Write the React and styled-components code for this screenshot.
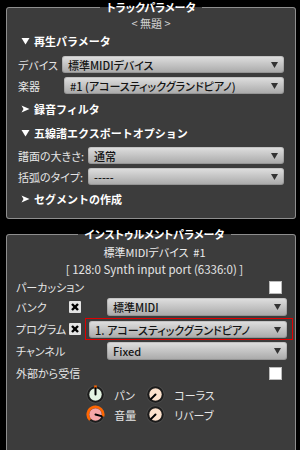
import React from "react";
import styled, { createGlobalStyle } from "styled-components";

const GlobalStyle = createGlobalStyle`
  html, body {
    margin: 0;
    padding: 0;
    background: #000;
  }
  body {
    width: 300px;
    height: 450px;
    overflow: hidden;
    font-family: "Noto Sans CJK JP", "DejaVu Sans", sans-serif;
    font-feature-settings: "palt";
  }
`;

const polar = (r, deg) => {
  const a = ((deg - 90) * Math.PI) / 180;
  return [9.5 + r * Math.cos(a), 9.5 + r * Math.sin(a)];
};

const arcPath = (r, from, to) => {
  const [x1, y1] = polar(r, from);
  const [x2, y2] = polar(r, to);
  const large = to - from > 180 ? 1 : 0;
  return `M${x1} ${y1} A${r} ${r} 0 ${large} 1 ${x2} ${y2}`;
};

const Knob = ({ face, angle, from, to }) => {
  const [px, py] = polar(6.2, angle);
  return (
    <svg width="19" height="19" viewBox="0 0 19 19">
      <circle cx="9.5" cy="9.5" r="9.2" fill="#4a4a4a" />
      <circle cx="9.5" cy="9.5" r="8.3" fill="#1c1c1c" />
      {from !== undefined && (
        <path d={arcPath(7.6, from, to)} stroke="#ff6600" strokeWidth="2.8" fill="none" />
      )}
      <circle cx="9.5" cy="9.5" r="6.2" fill={face} />
      <line x1="9.5" y1="9.5" x2={px} y2={py} stroke="#000" strokeWidth="2" strokeLinecap="round" />
    </svg>
  );
};

const DownArrow = () => (
  <svg width="7" height="6" viewBox="0 0 7 6">
    <polygon points="0,0 7,0 3.5,6" fill="#333" />
  </svg>
);

const Triangle = ({ open }) =>
  open ? (
    <svg width="9" height="8" viewBox="0 0 9 8">
      <polygon points="0.5,1 8.5,1 4.5,7.5" fill="#fff" />
    </svg>
  ) : (
    <svg width="9" height="8" viewBox="0 0 9 8">
      <polygon points="0.5,0.5 8.5,4 0.5,7.5 2.5,4" fill="#fff" />
    </svg>
  );

const XBox = () => (
  <svg width="12" height="12" viewBox="0 0 12 12">
    <rect x="0" y="0" width="12" height="12" rx="1" fill="#e4e4e4" />
    <line x1="3" y1="3" x2="9" y2="9" stroke="#000" strokeWidth="2.4" />
    <line x1="9" y1="3" x2="3" y2="9" stroke="#000" strokeWidth="2.4" />
  </svg>
);

const Page = styled.div`
  display: flex;
  flex-direction: column;
  padding-top: 1px;
`;

const Panel = styled.fieldset`
  margin: ${(p) => p.$mt || 0}px 4px 0 6px;
  padding: 0 ${(p) => p.$pr}px ${(p) => p.$pb}px ${(p) => p.$pl}px;
  border: 1px solid #8e8e8e;
  border-radius: 3px;
  background: #3c3c3c;
  min-width: 0;
`;

const Legend = styled.legend`
  margin: 0 auto;
  padding: 0 7px;
  font-size: 11px;
  line-height: 12px;
  font-weight: bold;
  color: #fff;
`;

const Body = styled.div`
  display: flex;
  flex-direction: column;
`;

const Caption = styled.div`
  margin-top: ${(p) => p.$mt}px;
  height: 14px;
  line-height: 14px;
  text-align: center;
  font-size: ${(p) => p.$size || 11}px;
  color: ${(p) => p.$color || "#d4d4d4"};
  white-space: nowrap;
`;

const Header = styled.div`
  margin-top: ${(p) => p.$mt}px;
  height: 18px;
  display: flex;
  align-items: center;
  gap: 4px;
  padding-left: 3px;
  font-size: 11px;
  font-weight: bold;
  color: #fff;
  font-feature-settings: normal;
`;

const Form = styled.div`
  margin-top: ${(p) => p.$mt}px;
  display: grid;
  grid-template-columns: auto 1fr;
  column-gap: 4px;
  row-gap: 4px;
  align-items: center;
`;

const Label = styled.div`
  font-size: 11px;
  color: #e6e6e6;
  white-space: nowrap;
  grid-column: ${(p) => p.$span || "auto"};
`;

const Select = styled.div`
  height: ${(p) => p.$h || 17}px;
  box-sizing: border-box;
  display: flex;
  align-items: center;
  justify-content: space-between;
  padding: 0 6px 0 6px;
  margin: ${(p) => p.$m || "0"};
  background: linear-gradient(#e0e0e0, #a8a8a8);
  border-radius: 3px;
  box-shadow: inset 0 0 0 1px rgba(0, 0, 0, 0.12);
  color: #141414;
  font-size: 11px;
  font-weight: 500;
  white-space: nowrap;
`;

const InstRow = styled.div`
  margin-top: ${(p) => p.$mt}px;
  display: grid;
  grid-template-columns: 53px 12px 1fr;
  align-items: center;
`;

const Highlight = styled.div`
  margin-left: 4px;
  padding: 2px 5px 1px 3px;
  border: 1px solid #e00000;
`;

const CheckBox = styled.div`
  justify-self: end;
  margin-right: 11px;
  width: 13px;
  height: 13px;
  box-sizing: border-box;
  background: #fff;
  border: 1px solid #bbb;
`;

const KnobGrid = styled.div`
  margin: 4px 8px 0 0;
  display: grid;
  grid-template-columns: 19px 23px 19px auto;
  column-gap: 9px;
  row-gap: 1px;
  justify-content: center;
  align-items: center;
`;

const KnobLabel = styled.div`
  font-size: 11px;
  color: #e6e6e6;
  white-space: nowrap;
`;

export default function App() {
  return (
    <Page>
      <GlobalStyle />
      <Panel $pl={11} $pr={11} $pb={10}>
        <Legend>トラックパラメータ</Legend>
        <Body>
          <Caption $mt={3}>&lt; 無題 &gt;</Caption>
          <Header $mt={2}>
            <Triangle open />
            再生パラメータ
          </Header>
          <Form $mt={6}>
            <Label>デバイス</Label>
            <Select>
              標準MIDIデバイス
              <DownArrow />
            </Select>
            <Label>楽器</Label>
            <Select $m="0 0 0 2px">
              #1 (アコースティックグランドピアノ)
              <DownArrow />
            </Select>
          </Form>
          <Header $mt={6}>
            <Triangle />
            録音フィルタ
          </Header>
          <Header $mt={6}>
            <Triangle open />
            五線譜エクスポートオプション
          </Header>
          <Form $mt={5}>
            <Label>譜面の大きさ:</Label>
            <Select>
              通常
              <DownArrow />
            </Select>
            <Label>括弧のタイプ:</Label>
            <Select>
              -----
              <DownArrow />
            </Select>
          </Form>
          <Header $mt={5}>
            <Triangle />
            セグメントの作成
          </Header>
        </Body>
      </Panel>

      <Panel $mt={9} $pl={9} $pr={2} $pb={28}>
        <Legend>インストゥルメントパラメータ</Legend>
        <Body>
          <Caption $mt={5} $color="#ececec">
            標準MIDIデバイス&nbsp;&nbsp;#1
          </Caption>
          <Caption $mt={3} $size={11.5} $color="#e4e4e4">
            [ 128:0 Synth input port (6336:0) ]
          </Caption>
          <InstRow $mt={3}>
            <Label $span="1 / 3">パーカッション</Label>
            <CheckBox />
          </InstRow>
          <InstRow $mt={3}>
            <Label>バンク</Label>
            <XBox />
            <Select $h={18} $m="0 6px 0 26px">
              標準MIDI
              <DownArrow />
            </Select>
          </InstRow>
          <InstRow $mt={2}>
            <Label>プログラム</Label>
            <XBox />
            <Highlight>
              <Select $h={17}>
                1. アコースティックグランドピアノ
                <DownArrow />
              </Select>
            </Highlight>
          </InstRow>
          <InstRow $mt={2}>
            <Label>チャンネル</Label>
            <span />
            <Select $h={18} $m="0 6px 0 26px">
              Fixed
              <DownArrow />
            </Select>
          </InstRow>
          <InstRow $mt={5}>
            <Label $span="1 / 3">外部から受信</Label>
            <CheckBox />
          </InstRow>
          <KnobGrid>
            <Knob face="#e4f4e2" angle={0} from={-9} to={9} />
            <KnobLabel>パン</KnobLabel>
            <Knob face="#fde2cc" angle={-135} />
            <KnobLabel>コーラス</KnobLabel>
            <Knob face="#f7a6a8" angle={105} from={-135} to={105} />
            <KnobLabel>音量</KnobLabel>
            <Knob face="#fde2cc" angle={-135} />
            <KnobLabel>リバーブ</KnobLabel>
          </KnobGrid>
        </Body>
      </Panel>
    </Page>
  );
}
